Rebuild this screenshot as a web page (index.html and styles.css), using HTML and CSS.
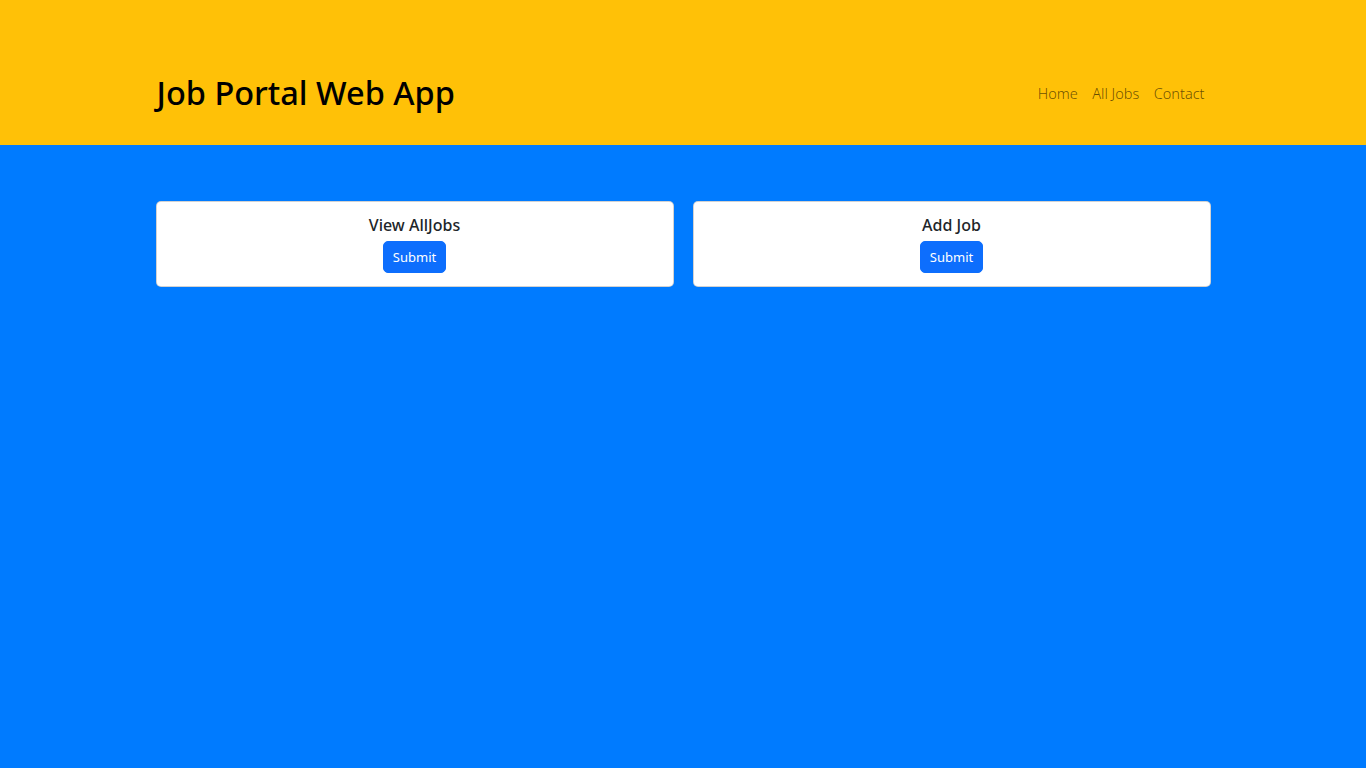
FILE: index.html
```html
<!DOCTYPE html>
<html lang="en">
<head>
<meta charset="utf-8">
<title>Job Portal Web App</title>
<link rel="stylesheet" href="styles.css">
</head>
<body>
<header class="top">
  <div class="wrap top-row">
    <h1 class="brand">Job Portal Web App</h1>
    <nav class="nav">
      <a href="#">Home</a>
      <a href="#">All Jobs</a>
      <a href="#">Contact</a>
    </nav>
  </div>
</header>
<main class="wrap cards">
  <section class="card">
    <h5 class="card-title">View AllJobs</h5>
    <button class="btn">Submit</button>
  </section>
  <section class="card">
    <h5 class="card-title">Add Job</h5>
    <button class="btn">Submit</button>
  </section>
</main>
</body>
</html>
```
FILE: styles.css
```css
* { box-sizing: border-box; }
html, body { margin: 0; height: 100%; }
body {
  background: #007bff;
  font-family: "Noto Sans", "Open Sans", sans-serif;
  color: #212529;
}
.wrap { width: 1055px; margin: 0 auto; }
.top { background: #ffc107; padding: 72px 0 29px; }
.top-row { display: flex; align-items: center; justify-content: space-between; height: 44px; }
.brand { margin: -3px 0 0 1px; font-size: 32.5px; font-weight: 500; color: #000; letter-spacing: 0; }
.nav { display: flex; gap: 14.5px; padding-right: 6px; margin-top: -2px; }
.nav a { color: rgba(0,0,0,.6); text-decoration: none; font-size: 14.5px; font-weight: 300; }
.cards { display: grid; grid-template-columns: 1fr 1fr; gap: 19px; padding-top: 56px; }
.card {
  background: #fff; border: 1px solid rgba(0,0,0,.175); border-radius: 5px;
  padding: 11px 12px 13px; display: flex; flex-direction: column; align-items: center;
}
.card-title { margin: 0 0 4px; font-size: 16px; font-weight: 500; line-height: 24px; }
.btn {
  font-family: inherit; font-size: 13px; line-height: 20px; color: #fff; background: #0d6efd;
  border: 1px solid #0d6efd; border-radius: 5px; padding: 5px 9px; cursor: pointer;
}
```
